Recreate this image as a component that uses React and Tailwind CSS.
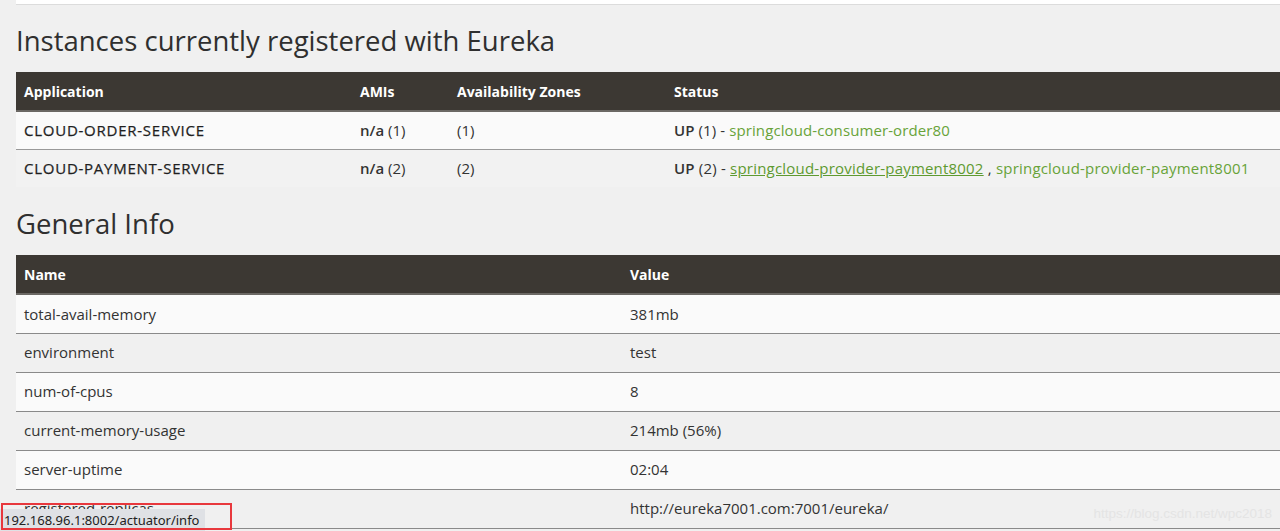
import React from "react";

const font = { fontFamily: '"Open Sans", "Noto Sans", sans-serif' };

function Th({ children, className = "" }) {
  return (
    <th className={"text-left font-bold text-white text-[14px] px-2 h-[39px] " + className}>{children}</th>
  );
}

export default function App() {
  const info = [
    ["total-avail-memory", "381mb"],
    ["environment", "test"],
    ["num-of-cpus", "8"],
    ["current-memory-usage", "214mb (56%)"],
    ["server-uptime", "02:04"],
    ["registered-replicas", "http://eureka7001.com:7001/eureka/"],
  ];
  return (
    <div className="relative w-[1280px] h-[531px] overflow-hidden bg-[#f0f0f0] text-[#333]" style={font}>
      <div className="ml-4 h-[5px] bg-white border-b border-[#dcdcdc]" />
      <h2 className="ml-4 mt-[18px] text-[27.5px] leading-[36px] text-[#2f2f2f]">
        Instances currently registered with Eureka
      </h2>
      <table className="ml-4 mt-[13px] w-[1264px] border-collapse text-[15px]">
        <thead>
          <tr className="bg-[#3c3833] border-b-2 border-[#6b6864]">
            <Th className="w-[336px]">Application</Th>
            <Th className="w-[97px]">AMIs</Th>
            <Th className="w-[217px]">Availability Zones</Th>
            <Th>Status</Th>
          </tr>
        </thead>
        <tbody>
          <tr className="bg-[#fafafa] border-b border-[#999] h-[38px]">
            <td className="px-2 tracking-[0.75px] text-[#1f1f1f]" style={{ WebkitTextStroke: "0.25px #1f1f1f" }}>CLOUD-ORDER-SERVICE</td>
            <td className="px-2"><b className="font-semibold">n/a</b> (1)</td>
            <td className="px-2">(1)</td>
            <td className="px-2 tracking-[0.1px]">
              <b className="font-semibold">UP</b> (1) - <span className="text-[#68a339]">springcloud-consumer-order80</span>
            </td>
          </tr>
          <tr className="bg-[#f2f2f2] h-[38px]">
            <td className="px-2 tracking-[0.75px] text-[#1f1f1f]" style={{ WebkitTextStroke: "0.25px #1f1f1f" }}>CLOUD-PAYMENT-SERVICE</td>
            <td className="px-2"><b className="font-semibold">n/a</b> (2)</td>
            <td className="px-2">(2)</td>
            <td className="px-2 tracking-[0.2px]">
              <b className="font-semibold">UP</b> (2) - <span className="text-[#5e9a30] underline">springcloud-provider-payment8002</span> , <span className="text-[#68a339]">springcloud-provider-payment8001</span>
            </td>
          </tr>
        </tbody>
      </table>
      <h2 className="ml-4 mt-[19px] text-[27.5px] leading-[36px] text-[#2f2f2f]">General Info</h2>
      <table className="ml-4 mt-[13px] w-[1264px] border-collapse text-[15px]">
        <thead>
          <tr className="bg-[#3c3833] border-b-2 border-[#6b6864]">
            <Th className="w-[606px]">Name</Th>
            <Th>Value</Th>
          </tr>
        </thead>
        <tbody>
          {info.map(([k, v], i) => (
            <tr key={k} className={(i % 2 === 0 ? "bg-[#fafafa]" : "bg-[#f0f0f0]") + " border-b border-[#8a8a8a] h-[39px]"}>
              <td className="px-2">{k}</td>
              <td className="px-2">{v}</td>
            </tr>
          ))}
        </tbody>
      </table>
      <div className="absolute right-[8px] bottom-[7px] text-[13.5px] text-[#e4e4e4]" style={{ fontFamily: '"Liberation Sans", sans-serif' }}>
        https://blog.csdn.net/wpc2018
      </div>
      <div className="absolute left-0 bottom-0 h-[22px] w-[205px] bg-[#dfe1e5] text-[13px] leading-[22px] pl-[4px] text-[#222]" style={{ fontFamily: '"Noto Sans", "Liberation Sans", sans-serif' }}>
        192.168.96.1:8002/actuator/info
      </div>
      <div className="absolute left-[1px] top-[503px] w-[231px] h-[27px] border-2 border-[#e8383d]" />
    </div>
  );
}
